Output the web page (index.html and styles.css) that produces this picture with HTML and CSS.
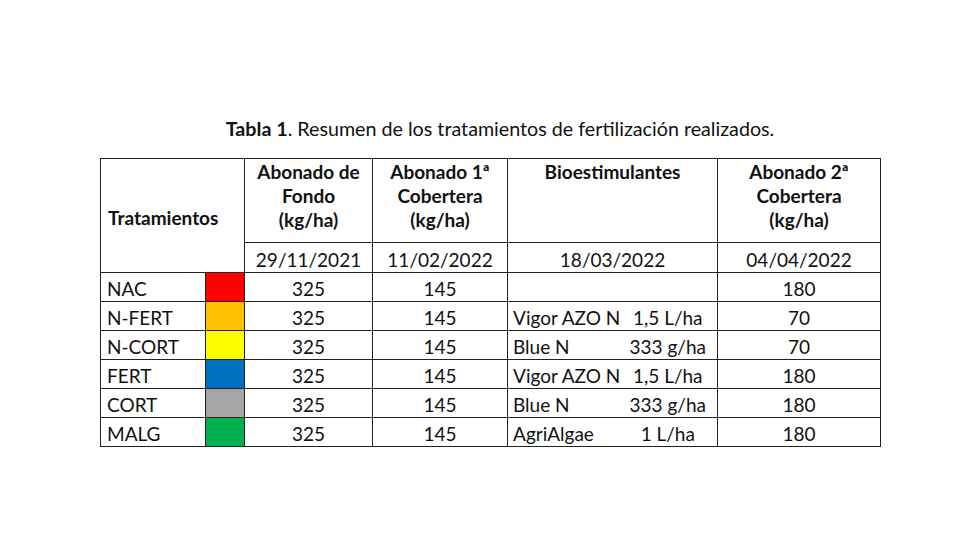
FILE: index.html
```html
<!DOCTYPE html>
<html lang="es">
<head>
<meta charset="utf-8">
<title>Tabla 1</title>
<link rel="stylesheet" href="styles.css">
</head>
<body>
<div class="page">
  <p class="caption"><b>Tabla 1</b>. Resumen de los tratamientos de fertilización realizados.</p>
  <table class="tbl">
    <colgroup>
      <col class="c-name"><col class="c-sw"><col class="c-fondo"><col class="c-cob1"><col class="c-bio1"><col class="c-bio2"><col class="c-cob2">
    </colgroup>
    <thead>
      <tr class="h-main">
        <th colspan="2" rowspan="2" class="h-trat">Tratamientos</th>
        <th>Abonado de<br>Fondo<br>(kg/ha)</th>
        <th>Abonado 1ª<br>Cobertera<br>(kg/ha)</th>
        <th colspan="2">Bioestimulantes</th>
        <th>Abonado 2ª<br>Cobertera<br>(kg/ha)</th>
      </tr>
      <tr class="h-date">
        <td>29/11/2021</td>
        <td>11/02/2022</td>
        <td colspan="2">18/03/2022</td>
        <td>04/04/2022</td>
      </tr>
    </thead>
    <tbody>
      <tr><td class="name">NAC</td><td class="sw red"></td><td>325</td><td>145</td><td class="bio"></td><td class="dose"></td><td>180</td></tr>
      <tr><td class="name">N-FERT</td><td class="sw orange"></td><td>325</td><td>145</td><td class="bio">Vigor AZO N</td><td class="dose">1,5 L/ha</td><td>70</td></tr>
      <tr><td class="name">N-CORT</td><td class="sw yellow"></td><td>325</td><td>145</td><td class="bio">Blue N</td><td class="dose">333 g/ha</td><td>70</td></tr>
      <tr><td class="name">FERT</td><td class="sw blue"></td><td>325</td><td>145</td><td class="bio">Vigor AZO N</td><td class="dose">1,5 L/ha</td><td>180</td></tr>
      <tr><td class="name">CORT</td><td class="sw grey"></td><td>325</td><td>145</td><td class="bio">Blue N</td><td class="dose">333 g/ha</td><td>180</td></tr>
      <tr><td class="name">MALG</td><td class="sw green"></td><td>325</td><td>145</td><td class="bio">AgriAlgae</td><td class="dose">1 L/ha</td><td>180</td></tr>
    </tbody>
  </table>
</div>
</body>
</html>
```
FILE: styles.css
```css
html, body {
  margin: 0;
  padding: 0;
  background: #ffffff;
}
.page {
  width: 980px;
  height: 560px;
  box-sizing: border-box;
  padding-top: 117px;
  font-family: "Lato", "Open Sans", sans-serif;
  color: #111111;
}
.caption {
  margin: 0 0 17px 0;
  text-align: center;
  padding-left: 20px;
  font-size: 19.7px;
  line-height: 24px;
}
.caption b { font-weight: 700; }
.tbl {
  margin-left: 100px;
  width: 781px;
  table-layout: fixed;
  border-collapse: collapse;
  font-size: 19px;
  line-height: 24px;
}
.c-name { width: 105px; }
.c-sw { width: 39px; }
.c-fondo { width: 128px; }
.c-cob1 { width: 135px; }
.c-bio1 { width: 115px; }
.c-bio2 { width: 95px; }
.c-cob2 { width: 163px; }
.tbl th, .tbl td {
  border: 1px solid #222222;
  padding: 0 4px;
  text-align: center;
  white-space: nowrap;
  overflow: hidden;
}
.tbl th {
  font-weight: 700;
  vertical-align: top;
  height: 82px;
  padding-top: 1px;
  padding-bottom: 0;
}
.tbl th.h-trat {
  text-align: left;
  vertical-align: middle;
  padding-left: 7px;
  padding-top: 4px;
}
.h-date td { height: 25px; padding-top: 4px; padding-bottom: 0; }
.tbl tbody td { height: 23px; padding-top: 4px; padding-bottom: 0; vertical-align: middle; }
.tbl td.name { text-align: left; padding-left: 6px; border-right: none; }
.tbl td.bio { text-align: left; padding-left: 5px; border-right: none; }
.tbl td.dose { border-left: none; padding-right: 8px; }
.tbl td.sw { padding: 0; border-left: 1px solid #222222; }
.red { background: #ff0000; }
.orange { background: #ffc000; }
.yellow { background: #ffff00; }
.blue { background: #0070c0; }
.grey { background: #a5a5a5; }
.green { background: #00b050; }
```
